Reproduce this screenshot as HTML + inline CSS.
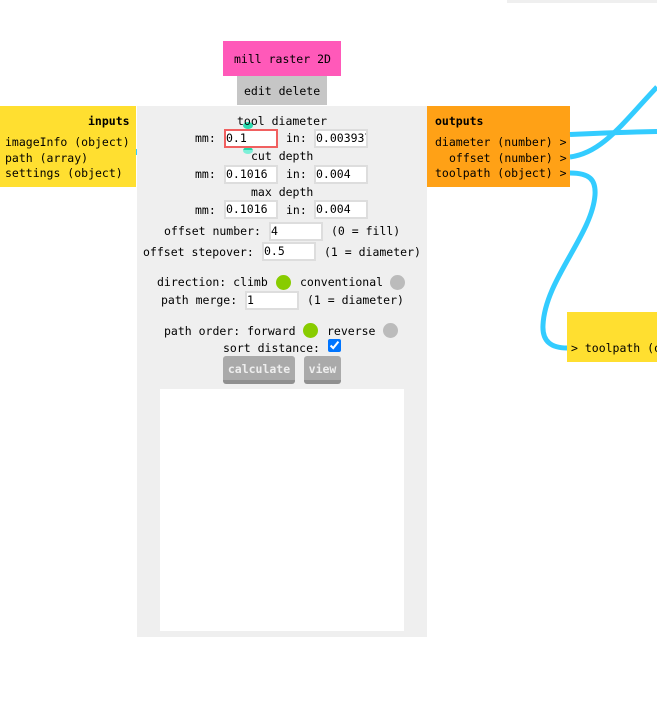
<!DOCTYPE html>
<html><head><meta charset="utf-8">
<style>
html,body{margin:0;padding:0;width:657px;height:704px;overflow:hidden;background:#fff}
body{font-family:"DejaVu Sans Mono","Liberation Mono",monospace;font-size:11.5px;color:#000}
.b{position:absolute}
.t{position:absolute;white-space:pre;line-height:14px;height:14px}
.i{position:absolute;box-sizing:border-box;border:2px solid #ddd;background:#fff;height:19px;padding:0;font-size:11.5px;line-height:15px;overflow:hidden;white-space:pre}
.c{position:absolute;border-radius:50%;width:15px;height:15px}
.btn{position:absolute;background:#aaa;border-radius:3px;border-bottom:4px solid #909090;box-sizing:border-box;color:#eee;font-weight:bold;text-align:center;height:28px;line-height:26px}
</style></head><body>
<div class="b" style="left:507px;top:0;width:150px;height:3px;background:#efefef"></div>
<div class="b" style="left:223px;top:41px;width:118px;height:35px;background:#ff59b9"></div>
<div class="t" style="left:234px;top:52px">mill raster 2D</div>
<div class="b" style="left:237px;top:76px;width:90px;height:29px;background:#c6c6c6"></div>
<div class="t" style="left:244px;top:84px">edit delete</div>
<div class="b" style="left:137px;top:106px;width:290px;height:531px;background:#efefef"></div>
<div class="b" style="left:0;top:106px;width:136px;height:81px;background:#ffdf30"></div>
<div class="t" style="left:88px;top:114px;font-weight:bold">inputs</div>
<div class="t" style="left:5px;top:135px">imageInfo (object)</div>
<div class="t" style="left:5px;top:151px">path (array)</div>
<div class="t" style="left:5px;top:166px">settings (object)</div>
<div class="b" style="left:136px;top:149px;width:1px;height:6px;background:#33ccff"></div>
<div class="b" style="left:427px;top:106px;width:143px;height:81px;background:#ffa116"></div>
<div class="t" style="left:435px;top:114px;font-weight:bold">outputs</div>
<div class="t" style="left:435px;top:135px">diameter (number) &gt;</div>
<div class="t" style="left:449px;top:151px">offset (number) &gt;</div>
<div class="t" style="left:435px;top:166px">toolpath (object) &gt;</div>
<div class="b" style="left:567px;top:312px;width:90px;height:50px;background:#ffdf30"></div>
<div class="t" style="left:571px;top:341px">&gt; toolpath (o</div>
<svg class="b" style="left:0;top:0" width="657" height="704" fill="none" stroke="#33ccff" stroke-width="5">
<path d="M570 134.500C600 133 630 132 657 131.500"/>
<path d="M570 157C602 153 622 124 657 87"/>
<path d="M570 173C590 173 596 180 595 195C592 235 545 280 543 325C542 342 552 348 567 348"/>
</svg>
<div class="b" style="left:243px;top:122px;width:10px;height:7px;border-radius:50%;background:#2ddcb0"></div>
<div class="b" style="left:243px;top:147px;width:10px;height:7px;border-radius:50%;background:linear-gradient(#1fd8a8 45%,#7df0d8 45%)"></div>
<div class="t" style="left:237px;top:114px">tool diameter</div>
<div class="t" style="left:195px;top:131px">mm:</div>
<div class="i" style="left:224px;top:129px;width:54px;border-color:#f06060">0.1</div>
<div class="t" style="left:286px;top:131px">in:</div>
<div class="i" style="left:314px;top:129px;width:54px">0.003937</div>
<div class="t" style="left:251px;top:149px">cut depth</div>
<div class="t" style="left:195px;top:167px">mm:</div>
<div class="i" style="left:224px;top:165px;width:54px">0.1016</div>
<div class="t" style="left:286px;top:167px">in:</div>
<div class="i" style="left:314px;top:165px;width:54px">0.004</div>
<div class="t" style="left:251px;top:185px">max depth</div>
<div class="t" style="left:195px;top:203px">mm:</div>
<div class="i" style="left:224px;top:200px;width:54px">0.1016</div>
<div class="t" style="left:286px;top:203px">in:</div>
<div class="i" style="left:314px;top:200px;width:54px">0.004</div>
<div class="t" style="left:164px;top:224px">offset number:</div>
<div class="i" style="left:269px;top:222px;width:54px">4</div>
<div class="t" style="left:331px;top:224px">(0 = fill)</div>
<div class="t" style="left:143px;top:245px">offset stepover:</div>
<div class="i" style="left:262px;top:242px;width:54px">0.5</div>
<div class="t" style="left:324px;top:245px">(1 = diameter)</div>
<div class="t" style="left:157px;top:275px">direction: climb</div>
<div class="c" style="left:276px;top:275px;background:#8c0"></div>
<div class="t" style="left:300px;top:275px">conventional</div>
<div class="c" style="left:390px;top:275px;background:#bbb"></div>
<div class="t" style="left:161px;top:293px">path merge:</div>
<div class="i" style="left:245px;top:291px;width:54px">1</div>
<div class="t" style="left:307px;top:293px">(1 = diameter)</div>
<div class="t" style="left:164px;top:324px">path order: forward</div>
<div class="c" style="left:303px;top:323px;background:#8c0"></div>
<div class="t" style="left:327px;top:324px">reverse</div>
<div class="c" style="left:383px;top:323px;background:#bbb"></div>
<div class="t" style="left:223px;top:341px">sort distance:</div>
<input type="checkbox" checked class="b" style="left:328px;top:339px;width:13px;height:13px;margin:0;accent-color:#0075ff">
<div class="btn" style="left:223px;top:356px;width:72px">calculate</div>
<div class="btn" style="left:304px;top:356px;width:37px">view</div>
<div class="b" style="left:160px;top:389px;width:244px;height:242px;background:#fff"></div>
</body></html>
